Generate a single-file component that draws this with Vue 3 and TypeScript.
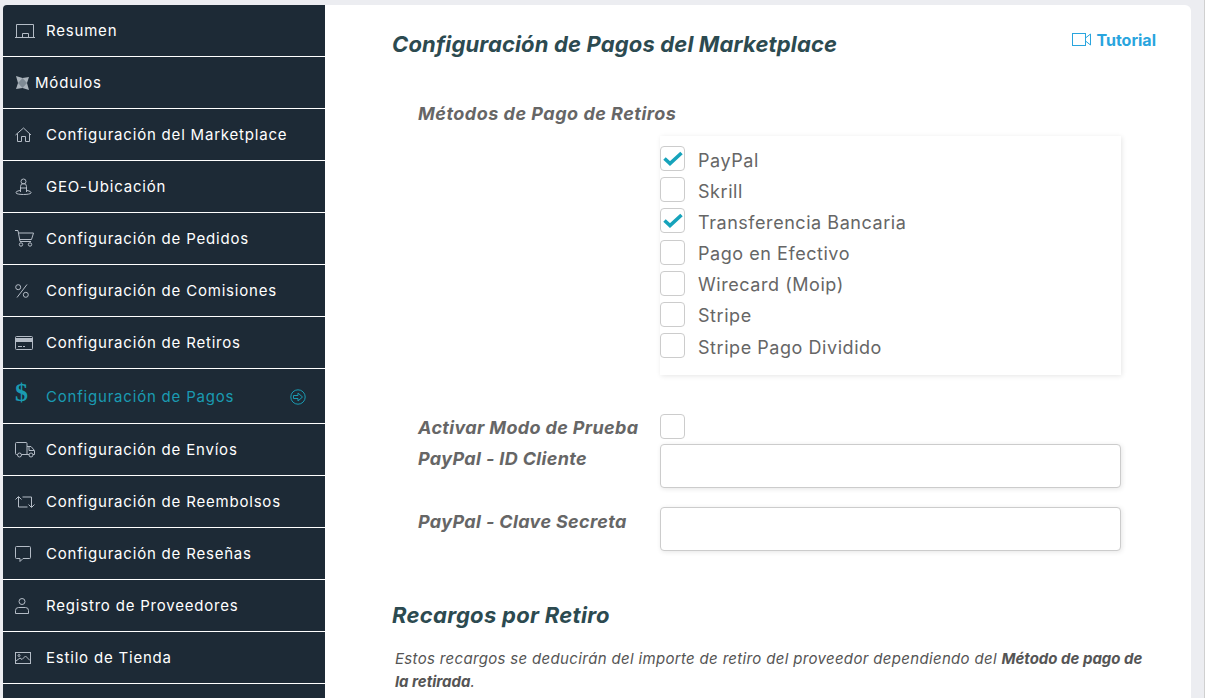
<script setup lang="ts">
interface MenuItem {
  label: string
  icon: string
  active?: boolean
}

const menu: MenuItem[] = [
  { label: 'Resumen', icon: 'board' },
  { label: 'Módulos', icon: 'modules' },
  { label: 'Configuración del Marketplace', icon: 'home' },
  { label: 'GEO-Ubicación', icon: 'geo' },
  { label: 'Configuración de Pedidos', icon: 'cart' },
  { label: 'Configuración de Comisiones', icon: 'percent' },
  { label: 'Configuración de Retiros', icon: 'card' },
  { label: 'Configuración de Pagos', icon: 'dollar', active: true },
  { label: 'Configuración de Envíos', icon: 'truck' },
  { label: 'Configuración de Reembolsos', icon: 'retweet' },
  { label: 'Configuración de Reseñas', icon: 'chat' },
  { label: 'Registro de Proveedores', icon: 'user' },
  { label: 'Estilo de Tienda', icon: 'image' }
]

const methods = [
  { label: 'PayPal', checked: true },
  { label: 'Skrill', checked: false },
  { label: 'Transferencia Bancaria', checked: true },
  { label: 'Pago en Efectivo', checked: false },
  { label: 'Wirecard (Moip)', checked: false },
  { label: 'Stripe', checked: false },
  { label: 'Stripe Pago Dividido', checked: false }
]
</script>

<template>
  <div class="page">
    <aside class="sidebar">
      <div v-for="item in menu" :key="item.label" class="row" :class="{ active: item.active, modules: item.icon === 'modules' }">
        <svg v-if="item.icon === 'board'" class="ico" width="20" height="14" viewBox="0 0 20 14" fill="none" stroke="currentColor">
          <path d="M1.500 13V.5h17V13M0 13.500h20M7.500 13V9.500h6V13" />
        </svg>
        <svg v-else-if="item.icon === 'modules'" class="ico" width="13" height="14" viewBox="0 0 13 14" fill="#aab3bb">
          <path d="M0 0l6.500 2L13 1l-2 6 2 7-6.500-2L0 13l2-6z" />
          <path d="M6.500 2L11 7l-4.500 5L2 7z" fill="#7f8b95" />
        </svg>
        <svg v-else-if="item.icon === 'home'" class="ico" width="17" height="15" viewBox="0 0 17 15" fill="none" stroke="currentColor">
          <path d="M.5 8L8.500 1l7.500 7M2.500 6.500v8h4v-5h4v5h4v-8" />
        </svg>
        <svg v-else-if="item.icon === 'geo'" class="ico" width="17" height="18" viewBox="0 0 17 18" fill="none" stroke="currentColor">
          <circle cx="8.500" cy="3.500" r="2.500" />
          <path d="M5.500 14V8.500a3 3 0 0 1 6 0V14M5.500 10h6" />
          <path d="M5 12.500c-3 .5-4.500 1.500-4 2.500 1 2 14 2 15 0 .5-1-1-2-4-2.500" />
        </svg>
        <svg v-else-if="item.icon === 'cart'" class="ico" width="19" height="17" viewBox="0 0 19 17" fill="none" stroke="currentColor">
          <path d="M0 .5h3l2 11h11M3.500 3h15l-2 6.500H4.600" />
          <circle cx="6" cy="14.500" r="1.700" />
          <circle cx="15" cy="14.500" r="1.700" />
        </svg>
        <svg v-else-if="item.icon === 'percent'" class="ico" width="14" height="14" viewBox="0 0 14 14" fill="none" stroke="currentColor">
          <circle cx="3.200" cy="3.200" r="2.500" />
          <circle cx="10.800" cy="10.800" r="2.500" />
          <path d="M12 .5L2 13.500" />
        </svg>
        <svg v-else-if="item.icon === 'card'" class="ico" width="18" height="14" viewBox="0 0 18 14" fill="none" stroke="currentColor">
          <rect x=".5" y=".5" width="17" height="13" rx="1" />
          <path d="M0 2.500h18v3H0z" fill="currentColor" />
          <path d="M3 10.500h4M8 10.500h2" />
        </svg>
        <span v-else-if="item.icon === 'dollar'" class="dollar">$</span>
        <svg v-else-if="item.icon === 'truck'" class="ico" width="20" height="16" viewBox="0 0 20 16" fill="none" stroke="currentColor">
          <path d="M2.500 12.500H1.500a1 1 0 0 1-1-1V1.500a1 1 0 0 1 1-1h9.500a1 1 0 0 1 1 1v11H6.500M12 4.500h4l3.500 4v4h-1.500M14 12.500h-2M14 5v3.500h5" />
          <circle cx="4.500" cy="13" r="2" />
          <circle cx="16" cy="13" r="2" />
        </svg>
        <svg v-else-if="item.icon === 'retweet'" class="ico" width="20" height="12" viewBox="0 0 20 12" fill="none" stroke="currentColor">
          <path d="M.5 3.500l3-3 3 3M3.500 1v10h9M19.500 8.500l-3 3-3-3M16.500 11V1h-9" />
        </svg>
        <svg v-else-if="item.icon === 'chat'" class="ico" width="16" height="16" viewBox="0 0 16 16" fill="none" stroke="currentColor">
          <path d="M1.500.5h13a1 1 0 0 1 1 1v10a1 1 0 0 1-1 1H8L5 15.500v-3H1.500a1 1 0 0 1-1-1v-10a1 1 0 0 1 1-1z" />
        </svg>
        <svg v-else-if="item.icon === 'user'" class="ico" width="14" height="16" viewBox="0 0 14 16" fill="none" stroke="currentColor">
          <circle cx="7" cy="3.500" r="3" />
          <path d="M.5 15.500v-3a3 3 0 0 1 3-3h7a3 3 0 0 1 3 3v3z" />
        </svg>
        <svg v-else-if="item.icon === 'image'" class="ico" width="16" height="12" viewBox="0 0 16 12" fill="none" stroke="currentColor">
          <rect x=".5" y=".5" width="15" height="11" />
          <circle cx="4" cy="3.500" r="1" />
          <path d="M1 9l4-3 2 1.500L10.500 4 15 8.500" />
        </svg>
        <span class="label">{{ item.label }}</span>
        <svg v-if="item.active" class="go" width="16" height="16" viewBox="0 0 16 16" fill="none" stroke="currentColor">
          <circle cx="8" cy="8" r="7.200" />
          <path d="M3.500 6.500h4.500V4l4.500 4-4.500 4V9.500H3.500z" />
        </svg>
      </div>
    </aside>

    <main class="card">
      <header class="head">
        <h2>Configuración de Pagos del Marketplace</h2>
        <a class="tutorial">
          <svg width="19" height="13" viewBox="0 0 19 13" fill="none" stroke="currentColor">
            <rect x=".5" y=".5" width="13" height="12" />
            <path d="M13.500 5l5-4v11l-5-4" />
          </svg>
          Tutorial
        </a>
      </header>

      <h3 class="sub">Métodos de Pago de Retiros</h3>

      <div class="methods">
        <label v-for="m in methods" :key="m.label" class="method">
          <span class="box">
            <svg v-if="m.checked" width="20" height="15" viewBox="0 0 20 15" fill="none" stroke="#16a3bb" stroke-width="3.600">
              <path d="M1.500 7.500l5.500 5L18.500 2" />
            </svg>
          </span>
          <span class="method-name">{{ m.label }}</span>
        </label>
      </div>

      <div class="field test">
        <span class="name">Activar Modo de Prueba</span>
        <span class="box"></span>
      </div>
      <div class="field">
        <span class="name">PayPal - ID Cliente</span>
        <input class="input" type="text" />
      </div>
      <div class="field">
        <span class="name">PayPal - Clave Secreta</span>
        <input class="input" type="text" />
      </div>

      <h2 class="fees">Recargos por Retiro</h2>
      <p class="note">Estos recargos se deducirán del importe de retiro del proveedor dependiendo del <b>Método de pago de la retirada</b>.</p>
    </main>
  </div>
</template>

<style scoped>
.page {
  display: flex;
  width: 1205px;
  height: 698px;
  box-sizing: border-box;
  padding: 5px 13px 0 3px;
  overflow: hidden;
  background: #ecedf1;
  border-right: 1px solid #d0d0d0;
  font-family: Inter, "Open Sans", sans-serif;
}

.sidebar {
  width: 322px;
  flex: none;
  background: #1d2a36;
  border-top-left-radius: 4px;
  color: #fff;
}

.row {
  display: flex;
  align-items: center;
  height: 52px;
  box-sizing: border-box;
  border-bottom: 1px solid #fff;
  padding-left: 13px;
  position: relative;
  font-size: 15px;
  letter-spacing: .8px;
  color: #fff;
}

.ico {
  color: #b4bcc6;
  flex: none;
  position: absolute;
  left: 12px;
}

.label {
  margin-left: 30px;
}

.row.modules .ico {
  position: static;
}

.row.modules .label {
  margin-left: 6px;
}

.row.active {
  height: 55px;
  color: #1a9bb2;
}

.dollar {
  position: absolute;
  left: 12px;
  top: 9px;
  font: bold 26px "Liberation Serif", serif;
}

.go {
  position: absolute;
  right: 19px;
  top: 20px;
}

.card {
  flex: 1;
  background: #fff;
  border-top-right-radius: 6px;
  padding: 0 35px 0 67px;
}

.head {
  display: flex;
  justify-content: space-between;
  padding-top: 26px;
}

h2 {
  margin: 0;
  font-size: 22px;
  line-height: 27px;
  letter-spacing: .15px;
  font-weight: 700;
  font-style: italic;
  color: #2c4a50;
}

.tutorial {
  display: flex;
  align-items: center;
  gap: 5px;
  height: 17px;
  font-size: 16px;
  font-weight: 700;
  color: #29a5de;
}

.sub {
  margin: 45px 0 0 26px;
  font-size: 18px;
  line-height: 22px;
  letter-spacing: .5px;
  font-weight: 700;
  font-style: italic;
  color: #666;
}

.methods {
  display: flex;
  flex-direction: column;
  width: 461px;
  box-sizing: border-box;
  margin: 11px 0 0 268px;
  padding: 10px 0 17px 0;
  gap: 6.2px;
  box-shadow: 1px 1px 5px rgba(0, 0, 0, .1);
}

.method {
  display: flex;
  align-items: center;
  gap: 13px;
  height: 25px;
  font-size: 18px;
  letter-spacing: .55px;
  color: #666;
}

.method-name {
  padding-top: 3px;
}

.box {
  display: flex;
  align-items: center;
  justify-content: center;
  width: 25px;
  height: 25px;
  box-sizing: border-box;
  flex: none;
  background: #fff;
  border: 1px solid #ccc;
  border-radius: 4px;
}

.field {
  display: flex;
  margin-left: 26px;
  margin-bottom: 19px;
}

.field.test {
  margin-top: 38px;
  margin-bottom: 5px;
  align-items: center;
}

.name {
  width: 242px;
  flex: none;
  padding-top: 4px;
  font-size: 18px;
  line-height: 22px;
  letter-spacing: .35px;
  font-weight: 700;
  font-style: italic;
  color: #666;
}

.input {
  width: 461px;
  height: 44px;
  box-sizing: border-box;
  border: 1px solid #ccc;
  border-radius: 4px;
  box-shadow: 1px 1px 5px rgba(0, 0, 0, .1);
  background: #fff;
}

.fees {
  margin-top: 51px;
  letter-spacing: .3px;
}

.note {
  margin: 18px 0 0 3px;
  font-size: 15px;
  font-style: italic;
  line-height: 23px;
  letter-spacing: .33px;
  color: #555;
}

.note b {
  font-weight: 700;
  letter-spacing: 0;
}
</style>

<style>
body {
  background: #fff;
  overflow: hidden;
}
</style>
